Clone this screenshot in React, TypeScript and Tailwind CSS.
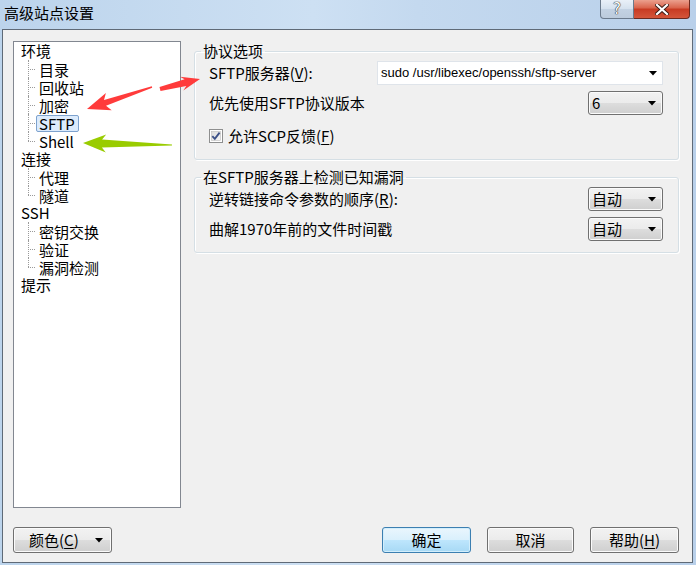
import React from "react";

type Node = { label: string; children: string[] };

const tree: Node[] = [
  { label: "环境", children: ["目录", "回收站", "加密", "SFTP", "Shell"] },
  { label: "连接", children: ["代理", "隧道"] },
  { label: "SSH", children: ["密钥交换", "验证", "漏洞检测"] },
  { label: "提示", children: [] },
];

const btnFace =
  "bg-[linear-gradient(#f2f2f2,#ebebeb_50%,#dddddd_50%,#cfcfcf)] border border-[#707070] rounded-[3px] shadow-[inset_0_0_0_1px_#fbfbfb]";

function Caret() {
  return (
    <svg width="8" height="5" viewBox="0 0 8 5" className="shrink-0">
      <polygon points="0,0 8,0 4,4.5" fill="#000" />
    </svg>
  );
}

function Key({ k }: { k: string }) {
  return (
    <span>
      (<span className="underline underline-offset-2">{k}</span>)
    </span>
  );
}

function Dropdown({ value }: { value: string }) {
  return (
    <div className={`${btnFace} w-[75px] h-[24px] flex items-center justify-between pl-[3px] pr-[6px]`}>
      <span>{value}</span>
      <Caret />
    </div>
  );
}

function Checkbox() {
  return (
    <svg width="14" height="14" viewBox="0 0 14 14" className="shrink-0">
      <defs>
        <linearGradient id="cb" x1="0" y1="0" x2="1" y2="1">
          <stop offset="0" stopColor="#dcdcdc" />
          <stop offset="1" stopColor="#f6f6f6" />
        </linearGradient>
      </defs>
      <rect x="0.5" y="0.5" width="13" height="13" fill="#fff" stroke="#8e8f8f" />
      <rect x="2.5" y="2.5" width="9" height="9" fill="url(#cb)" stroke="#bcbcbc" strokeWidth="0.6" />
      <path d="M3.3 7.2 L5.8 9.8 L10.6 3.6" fill="none" stroke="#3d5188" strokeWidth="1.9" />
    </svg>
  );
}

function arrow(
  tx: number,
  ty: number,
  hx: number,
  hy: number,
  w0: number,
  w1: number,
  headLen: number,
  headHalf: number
) {
  const dx = hx - tx;
  const dy = hy - ty;
  const L = Math.hypot(dx, dy);
  const ux = dx / L;
  const uy = dy / L;
  const nx = -uy;
  const ny = ux;
  const bx = hx - ux * headLen;
  const by = hy - uy * headLen;
  const sweep = 4;
  const p = (x: number, y: number) => `${x.toFixed(1)},${y.toFixed(1)}`;
  return [
    p(tx + (nx * w0) / 2, ty + (ny * w0) / 2),
    p(bx + (nx * w1) / 2, by + (ny * w1) / 2),
    p(bx + nx * headHalf - ux * sweep, by + ny * headHalf - uy * sweep),
    p(hx, hy),
    p(bx - nx * headHalf - ux * sweep, by - ny * headHalf - uy * sweep),
    p(bx - (nx * w1) / 2, by - (ny * w1) / 2),
    p(tx - (nx * w0) / 2, ty - (ny * w0) / 2),
  ].join(" ");
}

function Tree() {
  return (
    <div className="w-[168px] h-full bg-white border border-[#828790] pl-[7px] leading-[18px]">
      {tree.map((n) => (
        <div key={n.label}>
          <div className="h-[18px] flex items-center">{n.label}</div>
          {n.children.map((c, i) => {
            const last = i === n.children.length - 1;
            const sel = c === "SFTP";
            return (
              <div key={c} className="h-[18px] flex items-center">
                <div className="w-[8px] h-full ml-[7px] relative">
                  <div
                    className={`absolute left-0 top-0 border-l border-dotted border-[#9a9a9a] ${last ? "h-[9px]" : "h-full"}`}
                  />
                  <div className="absolute left-0 top-[9px] w-[7px] border-t border-dotted border-[#9a9a9a]" />
                </div>
                <div
                  className={`h-[17px] leading-[15px] flex items-center pl-[2px] pr-[3px] rounded-[2px] border ${
                    sel ? "bg-[#dcebfc] border-[#7da2ce]" : "border-transparent"
                  }`}
                >
                  {c}
                </div>
              </div>
            );
          })}
        </div>
      ))}
    </div>
  );
}

function Group({ title, children }: { title: string; children: React.ReactNode }) {
  return (
    <fieldset className="border border-[#d5dfe5] rounded-[3px] shadow-[inset_1px_1px_0_#fff,1px_1px_0_#fff] p-0 m-0 min-w-0">
      <legend className="ml-[6px] px-[2px] leading-[16px]">{title}</legend>
      <div className="pl-[14px] pr-[15px] pt-[2px] pb-[11px] flex flex-col">{children}</div>
    </fieldset>
  );
}

export default function App() {
  return (
    <div className="w-[696px] h-[565px] relative flex flex-col bg-[linear-gradient(90deg,#bcd4ec,#cde0f3_45%,#c4d9ef_60%,#b9d0ea)] text-[15px] text-black font-['Noto_Sans_CJK_SC','Liberation_Sans',sans-serif] overflow-hidden">
      {/* title bar */}
      <div className="h-[29px] flex justify-between items-start">
        <div className="pl-[4px] pt-[4px] leading-[17px]">高级站点设置</div>
        <div className="flex mr-[6px]">
          <div className="w-[34px] h-[19px] rounded-bl-[4px] border border-[#6b7a8c] border-t-0 bg-[linear-gradient(#e9f0f8,#d5e1ee_50%,#c3d2e3_50%,#bccbdc)] flex items-center justify-center">
            <span className="text-white text-[15px] leading-none font-['DejaVu_Sans',sans-serif] [text-shadow:0_0_1px_#333,0_0_1px_#333,0_0_1px_#333]">
              ?
            </span>
          </div>
          <div className="w-[56px] h-[19px] rounded-br-[4px] border border-[#6b2a20] border-t-0 border-l-0 bg-[linear-gradient(#eba08e,#d9624a_45%,#c73a22_50%,#d4553a)] flex items-center justify-center">
            <svg width="14" height="11" viewBox="0 0 14 11">
              <path d="M2 1 L12 10 M12 1 L2 10" stroke="#3a1a14" strokeWidth="4" strokeLinecap="square" />
              <path d="M2 1 L12 10 M12 1 L2 10" stroke="#fff" strokeWidth="2.2" strokeLinecap="square" />
            </svg>
          </div>
        </div>
      </div>

      {/* client */}
      <div className="flex-1 ml-[2px] mr-[3px] mb-[2px] border border-[#5f6a77] bg-[#f0f0f0] flex flex-col pt-[11px] pl-[10px] pr-[13px] pb-[9px]">
        <div className="h-[467px] flex">
          <Tree />
          <div className="flex-1 ml-[13px] flex flex-col pt-[2px]">
            <Group title="协议选项">
              <div className="h-[24px] flex items-center justify-between">
                <span>
                  SFTP服务器<Key k="V" />:
                </span>
                <div className="w-[286px] h-[24px] bg-white border border-[#dfe4ea] flex items-center justify-between pl-[3px] pr-[5px]">
                  <span className="font-['Liberation_Sans',sans-serif] text-[13px]">
                    sudo /usr/libexec/openssh/sftp-server
                  </span>
                  <Caret />
                </div>
              </div>
              <div className="h-[24px] mt-[6px] flex items-center justify-between">
                <span>优先使用SFTP协议版本</span>
                <Dropdown value="6" />
              </div>
              <div className="h-[24px] mt-[9px] flex items-center gap-[5px]">
                <Checkbox />
                <span>
                  允许SCP反馈<Key k="F" />
                </span>
              </div>
            </Group>
            <div className="mt-[9px]">
              <Group title="在SFTP服务器上检测已知漏洞">
                <div className="h-[24px] flex items-center justify-between">
                  <span>
                    逆转链接命令参数的顺序<Key k="R" />:
                  </span>
                  <Dropdown value="自动" />
                </div>
                <div className="h-[24px] mt-[6px] flex items-center justify-between">
                  <span>曲解1970年前的文件时间戳</span>
                  <Dropdown value="自动" />
                </div>
              </Group>
            </div>
          </div>
        </div>

        <div className="mt-auto flex items-center">
          <div className={`${btnFace} w-[99px] h-[26px] flex items-center justify-between pl-[15px] pr-[8px]`}>
            <span>
              颜色<Key k="C" />
            </span>
            <Caret />
          </div>
          <div className="ml-auto flex gap-[16px]">
            <div className="w-[89px] h-[26px] rounded-[3px] border border-[#3c7fb1] bg-[linear-gradient(#eaf6fd,#d9f0fc_50%,#bee6fd_50%,#a7d9f5)] shadow-[inset_0_0_0_1px_#d2eefc] flex items-center justify-center">
              确定
            </div>
            <div className={`${btnFace} w-[87px] h-[26px] flex items-center justify-center`}>取消</div>
            <div className={`${btnFace} w-[89px] h-[26px] flex items-center justify-center`}>
              <span>
                帮助<Key k="H" />
              </span>
            </div>
          </div>
        </div>
      </div>

      {/* annotation arrows */}
      <svg className="absolute inset-0 pointer-events-none" width="696" height="565">
        <polygon points={arrow(152, 87, 87, 109, 1.5, 6, 19, 9)} fill="#ff3b3b" />
        <polygon points={arrow(160, 89, 200, 79, 4, 7, 15, 7)} fill="#ff3b3b" />
        <polygon points={arrow(172, 145, 83, 143, 1, 8, 19, 9)} fill="#99cc00" />
      </svg>
    </div>
  );
}
